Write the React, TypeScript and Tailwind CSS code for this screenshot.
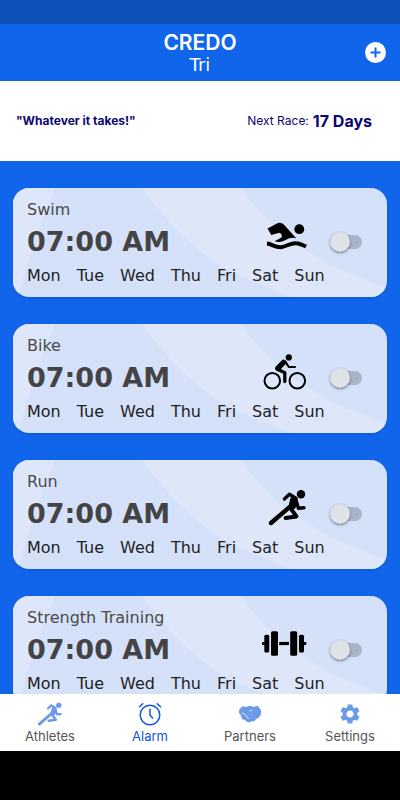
import { useState } from "react"
import type { ReactNode } from "react"
import { MdSettings } from "react-icons/md"

const DAYS = ["Mon", "Tue", "Wed", "Thu", "Fri", "Sat", "Sun"]

function SwimIcon() {
	return (
		<svg viewBox="0 0 44 44" className="h-11 w-11" fill="currentColor" aria-hidden="true">
			<circle cx="36.3" cy="15.2" r="4.9" />
			<path d="M4.6 14.6 13 10Q17.5 7.4 20.8 10.6L33.2 24.2Q28 22.8 22.5 26T11.6 27.2L18.8 23.2Q19.2 20 16.6 18.8L8.2 21Z" />
			<path
				d="M4 29.6C9 30 12 33.6 18 33.2C24 32.4 28 28.6 33 29.2Q37 29.4 43 32.6"
				fill="none"
				stroke="currentColor"
				strokeWidth="4"
			/>
		</svg>
	)
}

function BikeIcon() {
	return (
		<svg
			viewBox="0 0 44 44"
			className="h-11 w-11"
			fill="none"
			stroke="currentColor"
			strokeLinecap="round"
			strokeLinejoin="round"
			aria-hidden="true"
		>
			<circle cx="9.3" cy="30.7" r="7.8" strokeWidth="2" />
			<circle cx="34.3" cy="30.7" r="7.8" strokeWidth="2" />
			<circle cx="25.8" cy="7.4" r="3.1" fill="currentColor" stroke="none" />
			<path d="M20.6 12.4 14.8 18.4" strokeWidth="5.4" />
			<path d="M15 19.6 21.8 22.8V31.6" strokeWidth="3.3" />
			<path d="M22.4 11.6 25.8 17H32" strokeWidth="2" />
		</svg>
	)
}

function RunIcon({
	className = "h-11 w-11",
	viewBox = "0 0 44 44",
}: {
	className?: string
	viewBox?: string
}) {
	return (
		<svg
			viewBox={viewBox}
			className={className}
			fill="none"
			stroke="currentColor"
			strokeLinecap="round"
			strokeLinejoin="round"
			aria-hidden="true"
		>
			<circle cx="38" cy="8.2" r="4.2" fill="currentColor" stroke="none" />
			<path d="M8 37 28 19.8" strokeWidth="4.4" />
			<path d="M21.4 13 26.4 8.2 31.6 11.4" strokeWidth="3.4" />
			<path d="M31 13.6 29.6 19.4" strokeWidth="7.6" />
			<path d="M33.4 15.6 35.4 22.2 41 21.8" strokeWidth="3.4" />
			<path d="M27.6 22.4 33.4 30.4 22.6 32" strokeWidth="4" />
		</svg>
	)
}

function DumbbellIcon() {
	return (
		<svg
			viewBox="0 0 44 44"
			className="h-11 w-11 overflow-visible"
			fill="currentColor"
			aria-hidden="true"
		>
			<rect x="8" y="9.2" width="7" height="24.6" rx="1.6" />
			<rect x="27.2" y="9.2" width="7" height="24.6" rx="1.6" />
			<rect x="1.3" y="12.7" width="5" height="17.8" rx="1.6" />
			<rect x="36" y="12.7" width="5" height="17.8" rx="1.6" />
			<rect x="16.2" y="19.9" width="9.8" height="3.2" />
			<rect x="-1" y="19.9" width="3" height="3.2" rx="1" />
			<rect x="40.4" y="19.9" width="3" height="3.2" rx="1" />
		</svg>
	)
}

function AlarmIcon() {
	return (
		<svg
			viewBox="0 0 24 24"
			className="h-6 w-6"
			fill="none"
			stroke="currentColor"
			strokeWidth="1.5"
			strokeLinecap="round"
			aria-hidden="true"
		>
			<circle cx="12" cy="13" r="9.8" />
			<path d="M12 7.2V13.2L14.6 16M1.4 4.8 4.8 1.8M22.6 4.8 19.2 1.8" />
		</svg>
	)
}

function PartnersIcon() {
	return (
		<svg viewBox="0 0 24 24" className="h-6 w-6" fill="currentColor" aria-hidden="true">
			<path d="M1 8 4.4 4.2 8 5 12 3.8 16 5 19.6 3.8 23 8V12L21.2 15.2 18 17.2 15.8 19.4 13.4 19.2 11.4 20.6 8.4 19.4 6.8 17.8 4.6 17.6 3 14.6 3.4 13.4 1.2 11.4Z" />
			<path
				d="M3.8 10.8 6.4 12 9 14.6 10.6 17M11.6 9.4 13.4 8.2 14.6 8.2"
				fill="none"
				stroke="#fff"
				strokeWidth="0.8"
			/>
		</svg>
	)
}

function CardWaves() {
	return (
		<svg
			viewBox="0 0 374 109"
			preserveAspectRatio="none"
			className="absolute inset-0 h-full w-full"
			fill="#dee7fa"
			aria-hidden="true"
		>
			<path d="M0 0H42Q20 50 5 109H0Z" />
			<path d="M128 0H228Q275 68 374 100V109H278C210 82 190 76 128 0Z" />
		</svg>
	)
}

function AlarmCard({ name, icon }: { name: string; icon: ReactNode }) {
	const [on, setOn] = useState(false)

	return (
		<article className="relative shrink-0 overflow-hidden rounded-2xl bg-[#d5e1f9] pt-3 pr-[25px] pb-[11px] pl-[14px] font-['DejaVu_Sans',sans-serif] shadow-sm">
			<CardWaves />
			<div className="relative flex items-end">
				<div className="flex-1 whitespace-nowrap">
					<h2 className="text-[16px] leading-5 text-[#4a4a4a]">{name}</h2>
					<p className="mt-1.5 text-[27px] leading-8 font-bold text-[#444]">07:00 AM</p>
				</div>
				<span className="mr-[23px] text-black">{icon}</span>
				<label className="flex h-8 items-center">
					<input
						type="checkbox"
						role="switch"
						aria-label={name}
						checked={on}
						onChange={(e) => setOn(e.target.checked)}
						className="relative h-[14px] w-8 appearance-none rounded-full bg-[#abb5ca] before:absolute before:-top-[3px] before:left-0 before:h-5 before:w-5 before:rounded-full before:bg-[#dfe2e6] before:shadow-sm before:shadow-black/40 checked:bg-blue-400 checked:before:left-3"
					/>
				</label>
			</div>
			<ul className="relative mt-2 flex gap-4 text-[16px] leading-5 text-[#222]">
				{DAYS.map((day) => (
					<li key={day}>{day}</li>
				))}
			</ul>
		</article>
	)
}

function Tab({ label, icon, active }: { label: string; icon: ReactNode; active?: boolean }) {
	return (
		<a
			href={`#${label.toLowerCase()}`}
			aria-current={active ? "page" : undefined}
			className={
				active
					? "flex flex-1 flex-col items-center text-[#0f56e0]"
					: "flex flex-1 flex-col items-center text-[#6b9ae8]"
			}
		>
			{icon}
			<span className={active ? "mt-0.5 text-[13px] leading-4" : "mt-0.5 text-[13px] leading-4 text-[#555]"}>
				{label}
			</span>
		</a>
	)
}

export default function App() {
	return (
		<div className="flex h-screen flex-col bg-[#1065eb] font-[Inter,sans-serif]">
			{/* Status bar */}
			<div className="h-6 shrink-0 bg-[#0c51b8]" />

			<header className="grid h-[57px] shrink-0 grid-cols-[1fr_auto_1fr] items-center px-[14px] text-white">
				<h1 className="col-start-2 text-center">
					<span className="block text-[21px] leading-6 font-semibold">CREDO</span>
					<span className="block font-['DejaVu_Sans',sans-serif] text-[18px] leading-5">Tri</span>
				</h1>
				<button type="button" aria-label="Add alarm" className="justify-self-end">
					<svg viewBox="0 0 21 21" className="h-[21px] w-[21px]" aria-hidden="true">
						<circle cx="10.5" cy="10.5" r="10.5" fill="#fff" />
						<path d="M10.5 5.5V15.5M5.5 10.5H15.5" stroke="#1065eb" strokeWidth="2" />
					</svg>
				</button>
			</header>

			<section className="flex h-20 shrink-0 items-center justify-between bg-white pr-7 pl-4 text-[#0b0670]">
				<p className="text-[12px] font-bold">"Whatever it takes!"</p>
				<p className="flex items-center gap-1 text-[12px]">
					Next Race: <strong className="text-[16px] font-bold">17 Days</strong>
				</p>
			</section>

			<main className="flex min-h-0 flex-1 flex-col gap-[27px] overflow-hidden px-[13px] pt-[27px]">
				<AlarmCard name="Swim" icon={<SwimIcon />} />
				<AlarmCard name="Bike" icon={<BikeIcon />} />
				<AlarmCard name="Run" icon={<RunIcon />} />
				<AlarmCard name="Strength Training" icon={<DumbbellIcon />} />
			</main>

			<nav className="flex h-[57px] shrink-0 bg-white pt-2">
				<Tab label="Athletes" icon={<RunIcon className="h-6 w-6" viewBox="6 3 37 37" />} />
				<Tab label="Alarm" icon={<AlarmIcon />} active />
				<Tab label="Partners" icon={<PartnersIcon />} />
				<Tab label="Settings" icon={<MdSettings className="h-6 w-6" />} />
			</nav>

			{/* System navigation area */}
			<div className="h-[49px] shrink-0 bg-black" />
		</div>
	)
}
